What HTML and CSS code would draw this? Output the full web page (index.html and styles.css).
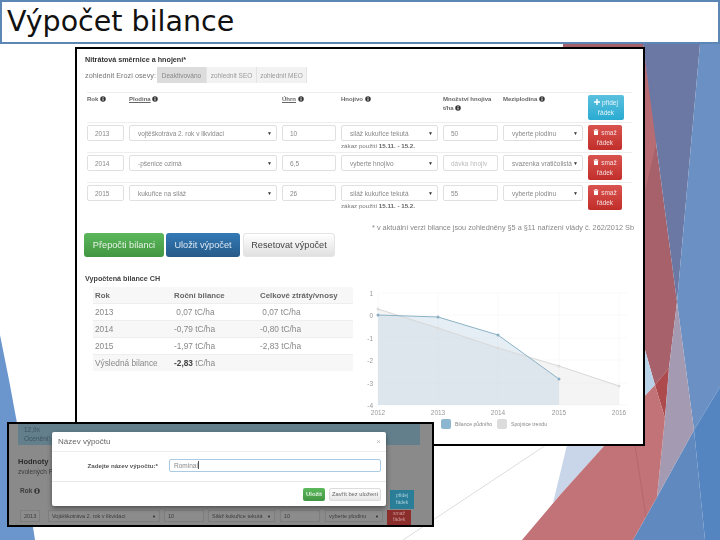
FILE: index.html
```html
<!DOCTYPE html>
<html lang="cs">
<head>
<meta charset="utf-8">
<title>Výpočet bilance</title>
<link rel="stylesheet" href="styles.css">
</head>
<body>
<svg width="0" height="0" class="defs">
  <symbol id="info" viewBox="0 0 10 10"><circle cx="5" cy="5" r="4.6" fill="#333"/><rect x="4.2" y="4.2" width="1.6" height="3.6" fill="#fff"/><rect x="4.2" y="2" width="1.6" height="1.5" fill="#fff"/></symbol>
  <symbol id="trash" viewBox="0 0 10 10"><rect x="1" y="1.2" width="8" height="1.4" fill="#fff"/><rect x="3.6" y="0" width="2.8" height="1.4" fill="#fff"/><rect x="1.7" y="3.1" width="6.6" height="6.9" fill="#fff"/></symbol>
  <symbol id="plus" viewBox="0 0 10 10"><path d="M3.8 0h2.4v3.8H10v2.4H6.2V10H3.8V6.2H0V3.8h3.8z" fill="#fff"/></symbol>
</svg>
<main class="slide">
  <svg class="backdrop" viewBox="0 0 720 540" width="720" height="540" aria-hidden="true">
    <polygon points="0,335 9,380 17,423 35,540 0,540" fill="#6a96cd"/>
    <line x1="403" y1="540" x2="567" y2="431" stroke="#cfcfcf" stroke-width=".7"/>
    <polygon points="567,445 605,445 560,495 553,503" fill="#c9d6ea"/>
    <polygon points="563,44 643,44 677,302 669,368 655,385 643,343 563,343" fill="#a6616a"/>
    <polygon points="643,44 657,140 643,200" fill="#b66c72"/>
    <polygon points="643,44 700,44 677,302" fill="#6b78a3"/>
    <polygon points="700,44 720,44 720,387 694,430 677,302" fill="#6a90c4"/>
    <polygon points="657,497 694,430 705,540 633,540" fill="#6089c0"/>
    <polygon points="694,430 720,387 720,540 705,540" fill="#5485c0"/>
    <polygon points="643,343 655,385 643,398" fill="#b8d2e8"/>
    <polygon points="655,385 669,368 665,418" fill="#ad4a4e"/>
    <polygon points="677,302 694,430 657,497 665,418 669,368" fill="#a49ab2"/>
    <polygon points="643,398 655,385 665,418 657,497 633,540 522,540 560,495 605,445" fill="#c27378"/>
    <line x1="635" y1="445" x2="646" y2="517" stroke="#a86068" stroke-width=".6"/>
  </svg>

  <h1 class="title">Výpočet bilance</h1>

  <section class="shot shot-main">
    <h2 class="form-title">Nitrátová směrnice a hnojení*</h2>
    <div class="toggle-row">
      <span class="toggle-label">zohlednit Erozi osevy:</span>
      <div class="btn-group">
        <span class="seg seg-active">Deaktivováno</span>
        <span class="seg">zohlednit SEO</span>
        <span class="seg">zohlednit MEO</span>
      </div>
    </div>

    <div class="form-grid">
      <div class="row row-head">
        <span class="th">Rok <svg class="ic"><use href="#info"/></svg></span>
        <span class="th"><u>Plodina</u> <svg class="ic"><use href="#info"/></svg></span>
        <span class="th"><u>Úhrn</u> <svg class="ic"><use href="#info"/></svg></span>
        <span class="th">Hnojivo <svg class="ic"><use href="#info"/></svg></span>
        <span class="th">Množství hnojiva t/ha <svg class="ic"><use href="#info"/></svg></span>
        <span class="th">Meziplodina <svg class="ic"><use href="#info"/></svg></span>
        <span class="rowbtn rowbtn-add"><span><svg class="ic-w"><use href="#plus"/></svg> přidej</span><span>řádek</span></span>
      </div>

      <div class="row">
        <span class="field">2013</span>
        <span class="field select"><span>vojtěškotráva 2. rok v likvidaci</span><i>▼</i></span>
        <span class="field">10</span>
        <div class="stack"><span class="field select"><span>siláž kukuřice tekutá</span><i>▼</i></span><span class="hint">zákaz použití <b>15.11. - 15.2.</b></span></div>
        <span class="field">50</span>
        <span class="field select"><span>vyberte plodinu</span><i>▼</i></span>
        <span class="rowbtn rowbtn-del"><span><svg class="ic-w"><use href="#trash"/></svg> smaž</span><span>řádek</span></span>
      </div>

      <div class="row">
        <span class="field">2014</span>
        <span class="field select"><span>-pšenice ozimá</span><i>▼</i></span>
        <span class="field">6,5</span>
        <div class="stack"><span class="field select"><span>vyberte hnojivo</span><i>▼</i></span></div>
        <span class="field placeholder">dávka hnojiv</span>
        <span class="field select"><span>svazenka vratičolistá</span><i>▼</i></span>
        <span class="rowbtn rowbtn-del"><span><svg class="ic-w"><use href="#trash"/></svg> smaž</span><span>řádek</span></span>
      </div>

      <div class="row">
        <span class="field">2015</span>
        <span class="field select"><span>kukuřice na siláž</span><i>▼</i></span>
        <span class="field">26</span>
        <div class="stack"><span class="field select"><span>siláž kukuřice tekutá</span><i>▼</i></span><span class="hint">zákaz použití <b>15.11. - 15.2.</b></span></div>
        <span class="field">55</span>
        <span class="field select"><span>vyberte plodinu</span><i>▼</i></span>
        <span class="rowbtn rowbtn-del"><span><svg class="ic-w"><use href="#trash"/></svg> smaž</span><span>řádek</span></span>
      </div>
    </div>

    <p class="note">* v aktuální verzi bilance jsou zohledněny §5 a §11 nařízení vlády č. 262/2012 Sb</p>

    <div class="actions">
      <span class="btn btn-green">Přepočti bilanci</span>
      <span class="btn btn-blue">Uložit výpočet</span>
      <span class="btn btn-grey">Resetovat výpočet</span>
    </div>

    <div class="results">
      <div class="results-left">
        <h3 class="results-title">Vypočtená bilance CH</h3>
        <table class="bilance">
          <thead><tr><th>Rok</th><th>Roční bilance</th><th>Celkové ztráty/vnosy</th></tr></thead>
          <tbody>
            <tr><td>2013</td><td>&nbsp;0,07 tC/ha</td><td>&nbsp;0,07 tC/ha</td></tr>
            <tr><td>2014</td><td>-0,79 tC/ha</td><td>-0,80 tC/ha</td></tr>
            <tr><td>2015</td><td>-1,97 tC/ha</td><td>-2,83 tC/ha</td></tr>
            <tr><td>Výsledná bilance</td><td><b>-2,83</b> tC/ha</td><td></td></tr>
          </tbody>
        </table>
      </div>
      <svg class="chart" viewBox="0 0 284 165" width="284" height="165">
        <g stroke="#f6f6f6" stroke-width=".7">
          <line x1="22" y1="19" x2="267" y2="19"/><line x1="22" y1="41" x2="267" y2="41"/><line x1="22" y1="64" x2="267" y2="64"/><line x1="22" y1="86" x2="267" y2="86"/><line x1="22" y1="109" x2="267" y2="109"/><line x1="18" y1="131" x2="267" y2="131"/>
          <line x1="18" y1="19" x2="18" y2="131"/><line x1="78" y1="19" x2="78" y2="131"/><line x1="138" y1="19" x2="138" y2="131"/><line x1="199" y1="19" x2="199" y2="131"/><line x1="259" y1="19" x2="259" y2="131"/>
        </g>
        <polygon points="18,35 78,54 138,74 199,92 259,112 259,131 18,131" fill="#dcdcdc" fill-opacity=".3"/>
        <polygon points="18,41 78,43 138,61 199,105 199,131 18,131" fill="#a8c8dc" fill-opacity=".3"/>
        <polyline points="18,35 78,54 138,74 199,92 259,112" fill="none" stroke="#d8d8d8" stroke-width="1"/>
        <polyline points="18,41 78,43 138,61 199,105" fill="none" stroke="#8db2c6" stroke-width="1"/>
        <g fill="#dcdcdc"><circle cx="18" cy="35" r="1.500"/><circle cx="78" cy="54" r="1.500"/><circle cx="138" cy="74" r="1.500"/><circle cx="199" cy="92" r="1.500"/><circle cx="259" cy="112" r="1.500"/></g>
        <g fill="#8aaec2"><circle cx="18" cy="41" r="1.500"/><circle cx="78" cy="43" r="1.500"/><circle cx="138" cy="61" r="1.500"/><circle cx="199" cy="105" r="1.500"/></g>
        <g class="axis" text-anchor="end">
          <text x="13" y="22">1</text><text x="13" y="44">0</text><text x="13" y="67">-1</text><text x="13" y="89">-2</text><text x="13" y="112">-3</text><text x="13" y="134">-4</text>
        </g>
        <g class="axis" text-anchor="middle">
          <text x="18" y="141">2012</text><text x="78" y="141">2013</text><text x="138" y="141">2014</text><text x="199" y="141">2015</text><text x="259" y="141">2016</text>
        </g>
        <rect x="81" y="145" width="10" height="10" rx="2" fill="#8db6d0"/>
        <text class="legend" x="95" y="152">Bilance půdního</text>
        <rect x="137" y="145" width="10" height="10" rx="2" fill="#dcdcdc"/>
        <text class="legend" x="151" y="152">Spojnice trendu</text>
      </svg>
    </div>
  </section>

  <section class="shot shot-modal">
    <div class="under">
      <div class="under-alert">12,9x<br>Ocenění: <span>x</span></div>
      <div class="under-title">Hodnoty</div>
      <div class="under-sub">zvolených Prav</div>
      <div class="under-rok">Rok <svg class="ic"><use href="#info"/></svg></div>
      <div class="under-row">
        <span class="uf uf-y">2013</span>
        <span class="uf uf-p"><span>Vojtěškotráva 2. rok v likvidaci</span><i>▼</i></span>
        <span class="uf uf-n">10</span>
        <span class="uf uf-h"><span>Siláž kukuřice tekutá</span><i>▼</i></span>
        <span class="uf uf-m">10</span>
        <span class="uf uf-v"><span>vyberte plodinu</span><i>▼</i></span>
        <span class="ub-red">smaž řádek</span>
      </div>
      <span class="ub-blue">přidej řádek</span>
    </div>
    <div class="modal">
      <div class="modal-head"><span>Název výpočtu</span><span class="close">×</span></div>
      <div class="modal-body">
        <label class="modal-label">Zadejte název výpočtu:*</label>
        <span class="modal-input">Rominal<i class="caret"></i></span>
      </div>
      <div class="modal-foot">
        <span class="mbtn mbtn-green">Uložit</span>
        <span class="mbtn mbtn-grey">Zavřít bez uložení</span>
      </div>
    </div>
  </section>
</main>
</body>
</html>
```

FILE: styles.css
```css
* { box-sizing: border-box; }
html, body { margin: 0; padding: 0; background: #fff; }
.defs { position: absolute; }
.slide {
  position: relative;
  width: 720px;
  height: 540px;
  overflow: hidden;
  background: #fff;
  font-family: "Liberation Sans", Arial, sans-serif;
}
.backdrop { position: absolute; left: 0; top: 0; }

.title {
  position: relative;
  margin: 0;
  height: 44px;
  padding: 0 0 0 5px;
  border: 2px solid #5b86b6;
  background: #fff;
  color: #111;
  font: 400 28.5px/39px "DejaVu Sans", Verdana, sans-serif;
}

.shot {
  position: absolute;
  border: 2px solid #000;
  overflow: hidden;
}
.shot-main {
  left: 75px;
  top: 47px;
  width: 570px;
  height: 399px;
  padding: 6px 8px 0 8px;
  background: #fff;
  filter: blur(.4px);
  color: #555;
  font-size: 7.5px;
}
.form-title {
  margin: 0 0 2px;
  height: 10px;
  font: 700 7.2px/10px "Liberation Sans", Arial, sans-serif;
  color: #333;
}
.toggle-row { display: flex; align-items: center; height: 16px; gap: 3px; }
.toggle-label { width: 69px; font-size: 7.3px; white-space: nowrap; color: #777; }
.btn-group { display: flex; height: 16px; }
.seg {
  display: flex;
  align-items: center;
  justify-content: center;
  width: 50px;
  background: #f2f2f2;
  border-right: 1px solid #e4e4e4;
  font-size: 6.5px;
  color: #999;
}
.seg-active { background: #dcdcdc; color: #888; }

.form-grid { margin: 9px 0 0 2px; }
.row {
  display: grid;
  grid-template-columns: 37px 148px 54px 97px 55px 80px 36px;
  column-gap: 5px;
  height: 30px;
  padding-top: 2px;
  border-top: 1px solid #eee;
  width: 545px;
}
.row > .rowbtn-del { width: 34px; }
.th { font-size: 6px; font-weight: 700; line-height: 9px; color: #666; }
.ic { width: 6px; height: 6px; vertical-align: -1px; }
.ic-w { width: 6px; height: 6px; vertical-align: -.5px; }
.field {
  display: flex;
  align-items: center;
  justify-content: space-between;
  height: 16px;
  padding: 0 7px;
  background: #fff;
  border: 1px solid #e0e0e0;
  border-radius: 2px;
  font-size: 6.5px;
  color: #888;
  white-space: nowrap;
}
.select { padding: 0 4px 0 8px; }
.select i { font-style: normal; font-size: 5px; color: #333; }
.placeholder { color: #bbb; }
.stack { display: flex; flex-direction: column; }
.hint { font-size: 6.2px; line-height: 9px; color: #777; white-space: nowrap; }
.hint b { color: #666; }
.rowbtn {
  display: flex;
  flex-direction: column;
  align-items: center;
  justify-content: center;
  height: 25px;
  border-radius: 2px;
  font-size: 6.5px;
  line-height: 10px;
  color: #f3dede;
}
.rowbtn-add { background: linear-gradient(#5bc0de, #2aabd2); color: #e6f6fb; }
.rowbtn-del { background: linear-gradient(#d9534f, #c12e2a); }

.note {
  margin: 11px 0 0;
  height: 10px;
  padding-right: 1px;
  text-align: right;
  font-size: 7.3px;
  line-height: 10px;
  color: #888;
}
.actions { display: flex; gap: 2px; height: 24px; margin-left: -1px; }
.btn {
  display: flex;
  align-items: center;
  justify-content: center;
  border-radius: 3px;
  font-size: 9.2px;
}
.btn-green { width: 80px; background: linear-gradient(#5cb85c, #419641); color: #e6f3e6; }
.btn-blue { width: 74px; background: linear-gradient(#337ab7, #265a88); color: #dbe7f2; }
.btn-grey { width: 92px; margin-left: 1px; background: linear-gradient(#fff, #e0e0e0); color: #444; border: 1px solid #e4e4e4; }

.results { display: flex; gap: 7px; margin-top: 17px; }
.results-left { width: 268px; flex: none; }
.results-title { margin: 0 0 3px; height: 10px; font: 700 7.2px/10px "Liberation Sans", Arial, sans-serif; color: #444; }
.bilance {
  margin-left: 8px;
  width: 260px;
  table-layout: fixed;
  border-collapse: collapse;
  font-size: 8.3px;
  color: #888;
}
.bilance th, .bilance td { height: 16.8px; padding: 0 2px; text-align: left; border-top: 1px solid #eee; }
.bilance th { background: #f7f7f7; border-top: 0; color: #666; font-weight: 700; font-size: 7.8px; }
.bilance th:nth-child(1), .bilance td:nth-child(1) { width: 79px; }
.bilance th:nth-child(2), .bilance td:nth-child(2) { width: 86px; }
.bilance tbody tr:nth-child(even) td { background: #f7f7f7; }
.bilance b { color: #444; }
.chart { flex: none; }
.axis { font: 6.5px "Liberation Sans", Arial, sans-serif; fill: #999; }
.legend { font: 5.2px "Liberation Sans", Arial, sans-serif; fill: #888; }

.shot-modal {
  left: 7px;
  top: 422px;
  width: 427px;
  height: 105px;
  background: #8a8a8a;
  filter: blur(.4px);
  font-size: 7px;
}
.under { height: 100%; padding-left: 9px; color: #3c3c3c; }
.under-alert {
  height: 21px;
  width: 402px;
  padding: 1px 0 0 6px;
  background: #637f8c;
  line-height: 9px;
  color: #3d5560;
  font-size: 6.5px;
}
.under-title { margin-top: 12px; font-size: 7.5px; font-weight: 700; color: #2b2b2b; }
.under-sub { margin-top: 2px; font-size: 6.5px; }
.under-rok { margin-top: 12px; padding-left: 2px; font-size: 6.5px; font-weight: 700; }
.under-row { display: flex; gap: 4px; margin-top: 16px; align-items: flex-start; }
.uf {
  display: flex;
  justify-content: space-between;
  align-items: center;
  height: 12px;
  padding: 0 3px;
  border: 1px solid #7e7e7e;
  background: #8c8c8c;
  font-size: 5.5px;
  white-space: nowrap;
  overflow: hidden;
}
.uf i { font-style: normal; font-size: 4px; color: #222; }
.uf-y { width: 20px; margin: 0 4px 0 2px; }
.uf-p { width: 112px; }
.uf-n { width: 40px; }
.uf-h { width: 67px; }
.uf-m { width: 40px; margin-left: 1px; }
.uf-v { width: 58px; margin-left: 1px; }
.ub-red {
  flex: none;
  width: 24px;
  height: 16px;
  background: #8a2d2b;
  color: #c99;
  font-size: 5px;
  line-height: 6px;
  text-align: center;
}
.ub-blue {
  position: absolute;
  left: 381px;
  top: 66px;
  width: 24px;
  height: 19px;
  padding-top: 2px;
  background: #2a7e98;
  color: #a9cfdc;
  font-size: 5px;
  line-height: 7px;
  text-align: center;
}

.modal {
  position: absolute;
  left: 43px;
  top: 8px;
  width: 334px;
  height: 74px;
  background: #fff;
  border-radius: 2px;
  box-shadow: 0 2px 5px rgba(0, 0, 0, .45);
  display: flex;
  flex-direction: column;
}
.modal-head {
  display: flex;
  justify-content: space-between;
  align-items: center;
  height: 20px;
  padding: 0 5px 0 6px;
  border-bottom: 1px solid #eee;
  font-size: 8px;
  color: #666;
}
.close { color: #bbb; font-size: 8px; }
.modal-body {
  display: flex;
  align-items: center;
  height: 30px;
  padding-bottom: 3px;
  border-bottom: 1px solid #e8e8e8;
}
.modal-label { width: 106px; text-align: right; font-size: 6.2px; font-weight: 700; color: #555; white-space: nowrap; }
.modal-input {
  display: flex;
  align-items: center;
  width: 212px;
  height: 13px;
  margin-left: 11px;
  padding-left: 4px;
  border: 1px solid #a9cbe3;
  border-radius: 2px;
  font-size: 6.5px;
  color: #888;
}
.caret { width: 1px; height: 8px; background: #555; }
.modal-foot { display: flex; justify-content: flex-end; align-items: center; gap: 4px; flex: 1; padding: 0 5px 0 0; }
.mbtn {
  display: flex;
  align-items: center;
  justify-content: center;
  height: 13px;
  border-radius: 2px;
  font-size: 5.8px;
  white-space: nowrap;
}
.mbtn-green { width: 22px; background: linear-gradient(#5cb85c, #419641); color: #e6f3e6; font-weight: 700; }
.mbtn-grey { width: 52px; background: linear-gradient(#fff, #e6e6e6); color: #666; border: 1px solid #ddd; }
```
